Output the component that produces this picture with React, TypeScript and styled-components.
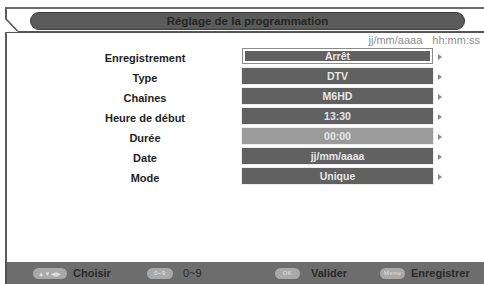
import React from 'react';
import styled, { createGlobalStyle } from 'styled-components';

const GlobalStyle = createGlobalStyle`
  html, body {
    margin: 0;
    padding: 0;
    background: #ffffff;
  }
  body {
    font-family: 'Liberation Sans', Arial, sans-serif;
  }
`;

const Screen = styled.div`
  width: 484px;
  height: 284px;
  background: #ffffff;
  display: flex;
  flex-direction: column;
  overflow: hidden;
`;

const Frame = styled.div`
  position: relative;
  margin: 7px 0 0 5px;
  flex: 1;
  border-top: 2px solid #6c6c6c;
  border-left: 2px solid #5c5c5c;
  display: flex;
  flex-direction: column;
`;

const Header = styled.header`
  position: relative;
  height: 24px;
  border-bottom: 2px solid #555;
  padding: 3px 19px 0 23px;
  box-sizing: border-box;
`;

const Notch = styled.svg`
  position: absolute;
  left: -2px;
  bottom: -2px;
`;

const TitlePill = styled.div`
  height: 18px;
  border-radius: 9px;
  background: #5b5b5b;
  border: 1px solid #3c3c3c;
  box-sizing: border-box;
  display: flex;
  align-items: center;
  justify-content: center;
  font-size: 11.5px;
  font-weight: bold;
  color: #262626;
`;

const Hint = styled.div`
  display: flex;
  justify-content: flex-end;
  gap: 10px;
  padding-right: 4px;
  height: 14px;
  align-items: center;
  font-size: 11px;
  color: #8c8c8c;
`;

const Rows = styled.div`
  display: grid;
  grid-template-columns: 170px 191px 10px;
  column-gap: 12px;
  row-gap: 4px;
  padding: 1px 0 0 53px;
  grid-auto-rows: 16px;
  align-items: center;
`;

const Label = styled.div`
  text-align: center;
  font-size: 11px;
  font-weight: bold;
  color: #1e1e1e;
  padding-top: 3px;
`;

const Value = styled.div<{ $selected?: boolean; $dim?: boolean }>`
  height: 16px;
  box-sizing: border-box;
  background: ${p => (p.$dim ? '#9b9b9b' : '#616161')};
  border: ${p => (p.$selected ? '1px solid #8a8a8a' : 'none')};
  box-shadow: ${p => (p.$selected ? 'inset 0 0 0 2px #ffffff' : '0 0 0 1px #ececec')};
  display: flex;
  align-items: center;
  justify-content: center;
  font-size: 10.5px;
  font-weight: bold;
  color: #e6e6e6;
`;

const Arrow = styled.div`
  width: 0;
  height: 0;
  margin-left: -7px;
  margin-top: 2px;
  border-top: 3px solid transparent;
  border-bottom: 3px solid transparent;
  border-left: 4px solid #8a8a8a;
`;

const Footer = styled.footer`
  margin-left: 5px;
  height: 22px;
  background: #6d6d6d;
  border-left: 2px solid #4e4e4e;
  display: grid;
  grid-template-columns: 114px 128px 105px auto;
  align-items: center;
  padding-left: 26px;
`;

const Group = styled.div`
  display: flex;
  align-items: center;
  gap: 6px;
`;

const Key = styled.span<{ $w: number }>`
  width: ${p => p.$w}px;
  height: 11px;
  border-radius: 6px;
  background: #a9a9a9;
  display: flex;
  align-items: center;
  justify-content: center;
  font-size: 6px;
  color: #e2e2e2;
  letter-spacing: 0.5px;
`;

const Action = styled.span<{ $gap?: number; $light?: boolean }>`
  font-size: 11px;
  font-weight: ${p => (p.$light ? 'normal' : 'bold')};
  color: #2a2a2a;
  margin-left: ${p => p.$gap ?? 0}px;
`;

const fields = [
  { label: 'Enregistrement', value: 'Arrêt', selected: true },
  { label: 'Type', value: 'DTV' },
  { label: 'Chaînes', value: 'M6HD' },
  { label: 'Heure de début', value: '13:30' },
  { label: 'Durée', value: '00:00', dim: true },
  { label: 'Date', value: 'jj/mm/aaaa' },
  { label: 'Mode', value: 'Unique' },
];

const App = () => (
  <Screen>
    <GlobalStyle />
    <Frame>
      <Header>
        <TitlePill>Réglage de la programmation</TitlePill>
        <Notch width="14" height="14" viewBox="0 0 14 14">
          <polygon points="0,0 13,13 0,13" fill="#fff" />
          <line x1="1" y1="0" x2="12.5" y2="12" stroke="#555" strokeWidth="1.6" />
        </Notch>
      </Header>
      <Hint>
        <span>jj/mm/aaaa</span>
        <span>hh:mm:ss</span>
      </Hint>
      <Rows>
        {fields.map(f => (
          <React.Fragment key={f.label}>
            <Label>{f.label}</Label>
            <Value $selected={f.selected} $dim={f.dim}>
              {f.value}
            </Value>
            <Arrow />
          </React.Fragment>
        ))}
      </Rows>
    </Frame>
    <Footer>
      <Group>
        <Key $w={34}>▲▼◀▶</Key>
        <Action>Choisir</Action>
      </Group>
      <Group>
        <Key $w={26}>0~9</Key>
        <Action $gap={4} $light>0~9</Action>
      </Group>
      <Group>
        <Key $w={25}>OK</Key>
        <Action $gap={5}>Valider</Action>
      </Group>
      <Group>
        <Key $w={25}>Menu</Key>
        <Action>Enregistrer</Action>
      </Group>
    </Footer>
  </Screen>
);

export default App;
